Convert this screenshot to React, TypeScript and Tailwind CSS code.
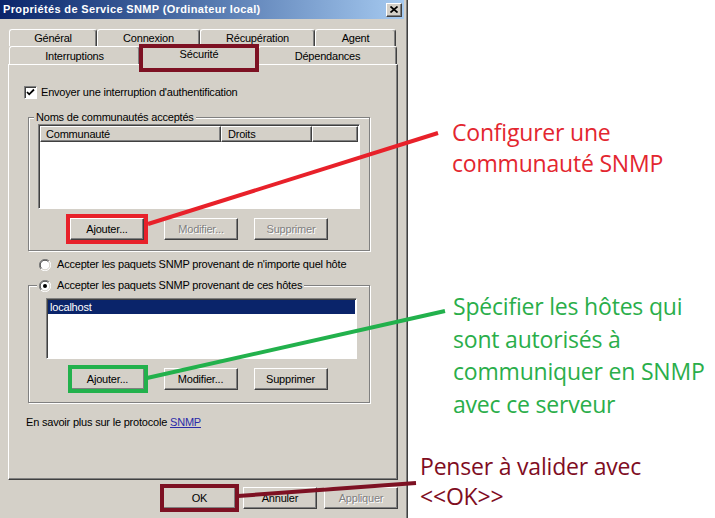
import type { ReactNode } from "react";

// Win2000/2003 classic 3D edges
const raised =
  "border border-t-white border-l-white border-r-[#404040] border-b-[#404040] shadow-[inset_-1px_-1px_0_#808080]";
const sunken =
  "border border-t-[#808080] border-l-[#808080] border-r-white border-b-white shadow-[inset_1px_1px_0_#404040]";
const etched = "border border-[#808080] shadow-[inset_1px_1px_0_#fff,1px_1px_0_#fff]";

function Btn({
  children,
  disabled,
  className = "",
}: {
  children: ReactNode;
  disabled?: boolean;
  className?: string;
}) {
  return (
    <div
      className={`flex h-[22px] shrink-0 items-center justify-center bg-[#d4d0c8] ${raised} ${
        disabled ? "text-[#808080] [text-shadow:1px_1px_0_#fff]" : "text-black"
      } ${className}`}
    >
      {children}
    </div>
  );
}

function Radio({ checked }: { checked?: boolean }) {
  return (
    <svg width="12" height="12" viewBox="0 0 12 12" className="shrink-0">
      <circle cx="6" cy="6" r="5.5" fill="#fff" />
      <path d="M1.9 10.1 A5.8 5.8 0 0 1 10.1 1.9" stroke="#808080" fill="none" />
      <path d="M10.1 1.9 A5.8 5.8 0 0 1 1.9 10.1" stroke="#fff" fill="none" />
      <path d="M2.6 9.4 A4.8 4.8 0 0 1 9.4 2.6" stroke="#404040" fill="none" />
      <path d="M9.4 2.6 A4.8 4.8 0 0 1 2.6 9.4" stroke="#d4d0c8" fill="none" />
      {checked && <circle cx="6" cy="6" r="2" fill="#000" />}
    </svg>
  );
}

function Checkbox() {
  return (
    <div className={`flex h-[13px] w-[13px] shrink-0 items-center justify-center bg-white ${sunken}`}>
      <svg width="9" height="9" viewBox="0 0 9 9">
        <path d="M1 4 L3.2 6.3 L8 1.5" stroke="#000" strokeWidth="1.8" fill="none" />
      </svg>
    </div>
  );
}

function Group({
  label,
  children,
  className = "",
  labelLeft,
}: {
  label: ReactNode;
  children: ReactNode;
  className?: string;
  labelLeft: string;
}) {
  return (
    <div className={`relative ${etched} ${className}`}>
      <div className={`absolute -top-[7px] ${labelLeft} flex h-[13px] items-center bg-[#d4d0c8] px-[2px]`}>
        {label}
      </div>
      {children}
    </div>
  );
}

function Tab({ label, w, selected }: { label: string; w: string; selected?: boolean }) {
  return (
    <div
      className={`relative flex ${w} items-center justify-center rounded-t-[3px] border-t border-l border-r border-t-white border-l-white border-r-[#404040] bg-[#d4d0c8] shadow-[inset_-1px_0_0_#808080] ${
        selected ? "top-[1px] z-10 h-[21px] pb-[2px]" : "h-full pt-[1px]"
      }`}
    >
      {label}
      {selected && (
        <div className="absolute -left-[2px] -right-[2px] -top-[1px] h-[28px] border-4 border-[#7d1123]" />
      )}
    </div>
  );
}

function TitleBar() {
  return (
    <div className="mr-[4px] flex h-[19px] shrink-0 items-center justify-between bg-gradient-to-r from-[#0a246a] to-[#a6caf0] pl-[3px] pr-[2px]">
      <span className="text-[11px] font-bold tracking-[0.35px] text-white">
        Propriétés de Service SNMP (Ordinateur local)
      </span>
      <div className={`flex h-[14px] w-[16px] items-center justify-center bg-[#d4d0c8] ${raised}`}>
        <svg width="8" height="7" viewBox="0 0 8 7">
          <path d="M0.5 0.5 L7.5 6.5 M7.5 0.5 L0.5 6.5" stroke="#000" strokeWidth="1.7" />
        </svg>
      </div>
    </div>
  );
}

function Panel() {
  return (
    <div className={`ml-[8px] flex h-[416px] w-[390px] flex-col bg-[#d4d0c8] ${raised}`}>
      <div className="ml-[15px] mt-[21px] flex h-[13px] items-center gap-[4px]">
        <Checkbox />
        <span>Envoyer une interruption d'authentification</span>
      </div>

      <Group
        className="ml-[19px] mt-[18px] w-[342px] pb-[10px] pt-[6px]"
        labelLeft="left-[5px]"
        label="Noms de communautés acceptés"
      >
        <div className={`ml-[9px] flex h-[85px] w-[322px] flex-col bg-white ${sunken} p-[1px]`}>
          <div className="flex h-[16px] shrink-0">
            <div className={`flex w-[181px] items-center bg-[#d4d0c8] pl-[5px] ${raised}`}>Communauté</div>
            <div className={`flex w-[91px] items-center bg-[#d4d0c8] pl-[6px] ${raised}`}>Droits</div>
            <div className={`flex flex-1 bg-[#d4d0c8] ${raised}`} />
          </div>
        </div>
        <div className="mt-[9px] flex justify-center">
          <Btn className="w-[74px] outline-4 outline-[#e8212a]">Ajouter...</Btn>
          <Btn disabled className="ml-[20px] w-[74px]">
            Modifier...
          </Btn>
          <Btn disabled className="ml-[16px] w-[74px]">
            Supprimer
          </Btn>
        </div>
      </Group>

      <div className="ml-[30px] mt-[7px] flex h-[13px] items-center gap-[6px]">
        <Radio />
        <span>Accepter les paquets SNMP provenant de n'importe quel hôte</span>
      </div>

      <Group
        className="ml-[19px] mt-[14px] w-[342px] pb-[12px] pt-[12px]"
        labelLeft="left-[8px]"
        label={
          <span className="flex items-center gap-[6px]">
            <Radio checked />
            Accepter les paquets SNMP provenant de ces hôtes
          </span>
        }
      >
        <div className={`ml-[17px] flex h-[61px] w-[311px] flex-col bg-white p-[1px] ${sunken}`}>
          <div className="flex h-[14px] items-center bg-[#0a246a] pl-[2px] text-white">localhost</div>
        </div>
        <div className="mt-[9px] flex justify-center">
          <Btn className="w-[74px] outline-4 -outline-offset-1 outline-[#22b14c]">Ajouter...</Btn>
          <Btn className="ml-[19px] w-[74px]">Modifier...</Btn>
          <Btn className="ml-[16px] w-[74px]">Supprimer</Btn>
        </div>
      </Group>

      <div className="ml-[17px] mt-[13px] flex h-[13px] items-center">
        En savoir plus sur le protocole&nbsp;
        <span className="text-[#2b2ba8] underline">SNMP</span>
      </div>
    </div>
  );
}

function Dialog() {
  return (
    <div className="flex h-[518px] w-[408px] shrink-0 flex-col bg-[#d4d0c8] shadow-[inset_-1px_0_0_#404040,inset_-2px_0_0_#808080]">
      <TitleBar />
      <div className="ml-[9px] mt-[10px] flex h-[17px]">
        <Tab label="Général" w="w-[88px]" />
        <Tab label="Connexion" w="w-[103px]" />
        <Tab label="Récupération" w="w-[115px]" />
        <Tab label="Agent" w="w-[81px]" />
      </div>
      <div className="ml-[9px] flex h-[18px] items-end">
        <Tab label="Interruptions" w="w-[131px]" />
        <Tab label="Sécurité" w="w-[118px]" selected />
        <Tab label="Dépendances" w="w-[139px]" />
      </div>
      <Panel />
      <div className="mt-[7px] flex justify-end pr-[10px]">
        <Btn className="w-[73px] outline-4 -outline-offset-1 outline-[#7d1123]">OK</Btn>
        <Btn className="ml-[7px] w-[74px]">Annuler</Btn>
        <Btn disabled className="ml-[7px] w-[74px]">
          Appliquer
        </Btn>
      </div>
    </div>
  );
}

function Notes() {
  return (
    <div className="flex flex-1 flex-col font-['Open_Sans',sans-serif] text-[23px]">
      <p className="ml-[44px] mt-[117px] leading-[31px] text-[#e3262f]">
        Configurer une
        <br />
        communauté SNMP
      </p>
      <p className="ml-[45px] mt-[111px] leading-[32.5px] text-[#2aae4a]">
        Spécifier les hôtes qui
        <br />
        sont autorisés à
        <br />
        communiquer en SNMP
        <br />
        avec ce serveur
      </p>
      <p className="ml-[12px] mt-[31px] leading-[30px] text-[#800d1f]">
        Penser à valider avec
        <br />
        &lt;&lt;OK&gt;&gt;
      </p>
    </div>
  );
}

// Connector lines drawn over the dialog
function Callouts() {
  return (
    <svg className="pointer-events-none absolute inset-0" width="715" height="518" viewBox="0 0 715 518">
      <line x1="148" y1="224" x2="438" y2="133" stroke="#e8212a" strokeWidth="4" />
      <line x1="147" y1="378" x2="445" y2="311" stroke="#22b14c" strokeWidth="4" />
      <line x1="238" y1="496" x2="416" y2="483" stroke="#7d1123" strokeWidth="4" />
    </svg>
  );
}

export default function App() {
  return (
    <div className="relative flex h-[518px] w-[715px] overflow-hidden bg-white font-['Liberation_Sans',Arial,sans-serif] text-[11px] tracking-[-0.2px] text-black">
      <Dialog />
      <Notes />
      <Callouts />
    </div>
  );
}
